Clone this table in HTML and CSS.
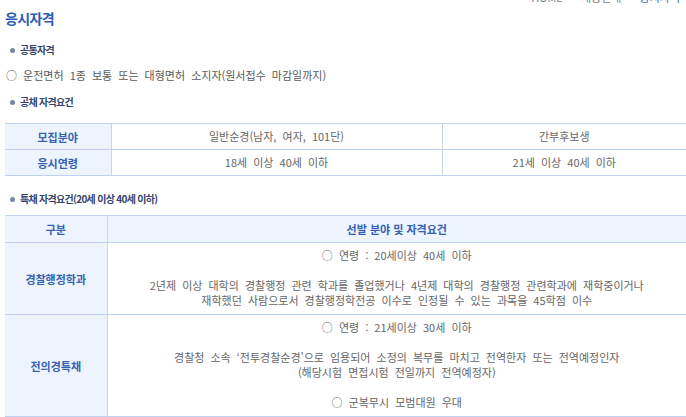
FILE: index.html
```html
<!DOCTYPE html>
<html lang="ko">
<head>
<meta charset="utf-8">
<title>응시자격</title>
<link rel="stylesheet" href="styles.css">
</head>
<body>
<div class="page">
  <div class="head">
    <h2 class="title">응시자격</h2>
    <div class="crumb"><span>HOME</span><span class="sep">&gt;</span><span>채용안내</span><span class="sep">&gt;</span><span class="cur">응시자격</span></div>
  </div>

  <h3 class="sub sub-first">공통자격</h3>
  <p class="txt">○ 운전면허 1종 보통 또는 대형면허 소지자(원서접수 마감일까지)</p>

  <h3 class="sub sub-second">공채 자격요건</h3>
  <table class="tbl tbl1">
    <colgroup><col class="c1a"><col class="c1b"><col></colgroup>
    <tr>
      <th>모집분야</th>
      <td>일반순경(남자, 여자, 101단)</td>
      <td>간부후보생</td>
    </tr>
    <tr>
      <th>응시연령</th>
      <td>18세 이상 40세 이하</td>
      <td>21세 이상 40세 이하</td>
    </tr>
  </table>

  <h3 class="sub sub-third">특채 자격요건(20세 이상 40세 이하)</h3>
  <table class="tbl tbl2">
    <colgroup><col class="c2a"><col></colgroup>
    <tr class="hrow">
      <th>구분</th>
      <th>선발 분야 및 자격요건</th>
    </tr>
    <tr>
      <th>경찰행정학과</th>
      <td class="multi">○ 연령 : 20세이상 40세 이하<br><br>2년제 이상 대학의 경찰행정 관련 학과를 졸업했거나 4년제 대학의 경찰행정 관련학과에 재학중이거나<br>재학했던 사람으로서 경찰행정학전공 이수로 인정될 수 있는 과목을 45학점 이수</td>
    </tr>
    <tr>
      <th>전의경특채</th>
      <td class="multi">○ 연령 : 21세이상 30세 이하<br><br>경찰청 소속 ‘전투경찰순경’으로 임용되어 소정의 복무를 마치고 전역한자 또는 전역예정인자<br>(해당시험 면접시험 전일까지 전역예정자)<br><br>○ 군복무시 모범대원 우대</td>
    </tr>
  </table>
</div>
</body>
</html>
```
FILE: styles.css
```css
html, body {
  margin: 0;
  padding: 0;
  background: #ffffff;
}
body {
  font-family: "Noto Sans CJK KR", "Noto Sans", sans-serif;
  font-size: 11px;
  color: #666666;
  overflow: hidden;
}
.page {
  padding: 8px 0 0 5px;
}
.head {
  display: flex;
  justify-content: space-between;
  align-items: flex-start;
}
.title {
  margin: 0;
  font-size: 14px;
  line-height: 20px;
  font-weight: bold;
  color: #2b5cb3;
  letter-spacing: -0.6px;
}
.crumb {
  margin: -17px 6px 0 0;
  font-size: 11px;
  line-height: 13px;
  color: #7a7f8c;
  display: flex;
  gap: 6px;
}
.crumb .sep {
  color: #9aa6c0;
}
.crumb .cur {
  color: #3d6fd0;
}
.sub {
  margin: 0;
  padding-left: 15px;
  position: relative;
  font-size: 10px;
  line-height: 16px;
  font-weight: bold;
  color: #33446d;
  letter-spacing: -0.7px;
}
.sub::before {
  content: "";
  position: absolute;
  left: 5px;
  top: 6px;
  width: 5px;
  height: 5px;
  border-radius: 50%;
  background: #7886a6;
}
.sub-first { margin-top: 14px; }
.sub-second { margin-top: 11px; }
.sub-third { margin-top: 15px; }
.txt {
  margin: 9px 0 0 1px;
  line-height: 16px;
  color: #5a5a5a;
  word-spacing: 3px;
}
.tbl {
  width: 100%;
  border-collapse: collapse;
  table-layout: fixed;
}
.tbl1 { margin-top: 13px; }
.tbl2 { margin-top: 8px; }
.c1a { width: 106px; }
.c1b { width: 331px; }
.c2a { width: 102px; }
.tbl th, .tbl td {
  padding: 0;
  text-align: center;
  vertical-align: middle;
  border-top: 1px solid #bfd3f1;
  border-bottom: 1px solid #bfd3f1;
  border-left: 1px solid #c6d6e2;
  border-right: 1px solid #c6d6e2;
  font-weight: normal;
}
.tbl tr > :first-child { border-left: none; }
.tbl tr > :last-child { border-right: none; }
.tbl th {
  background: #eef4fd;
  color: #3461b2;
  font-weight: bold;
}
.tbl td {
  color: #666666;
  line-height: 15px;
  word-spacing: 3px;
}
.tbl1 tr { height: 26px; }
.tbl2 .hrow { height: 27px; }
.tbl2 .hrow th { word-spacing: 0; }
.tbl2 .multi {
  padding: 5px 0 6px;
  line-height: 15px;
}
```
